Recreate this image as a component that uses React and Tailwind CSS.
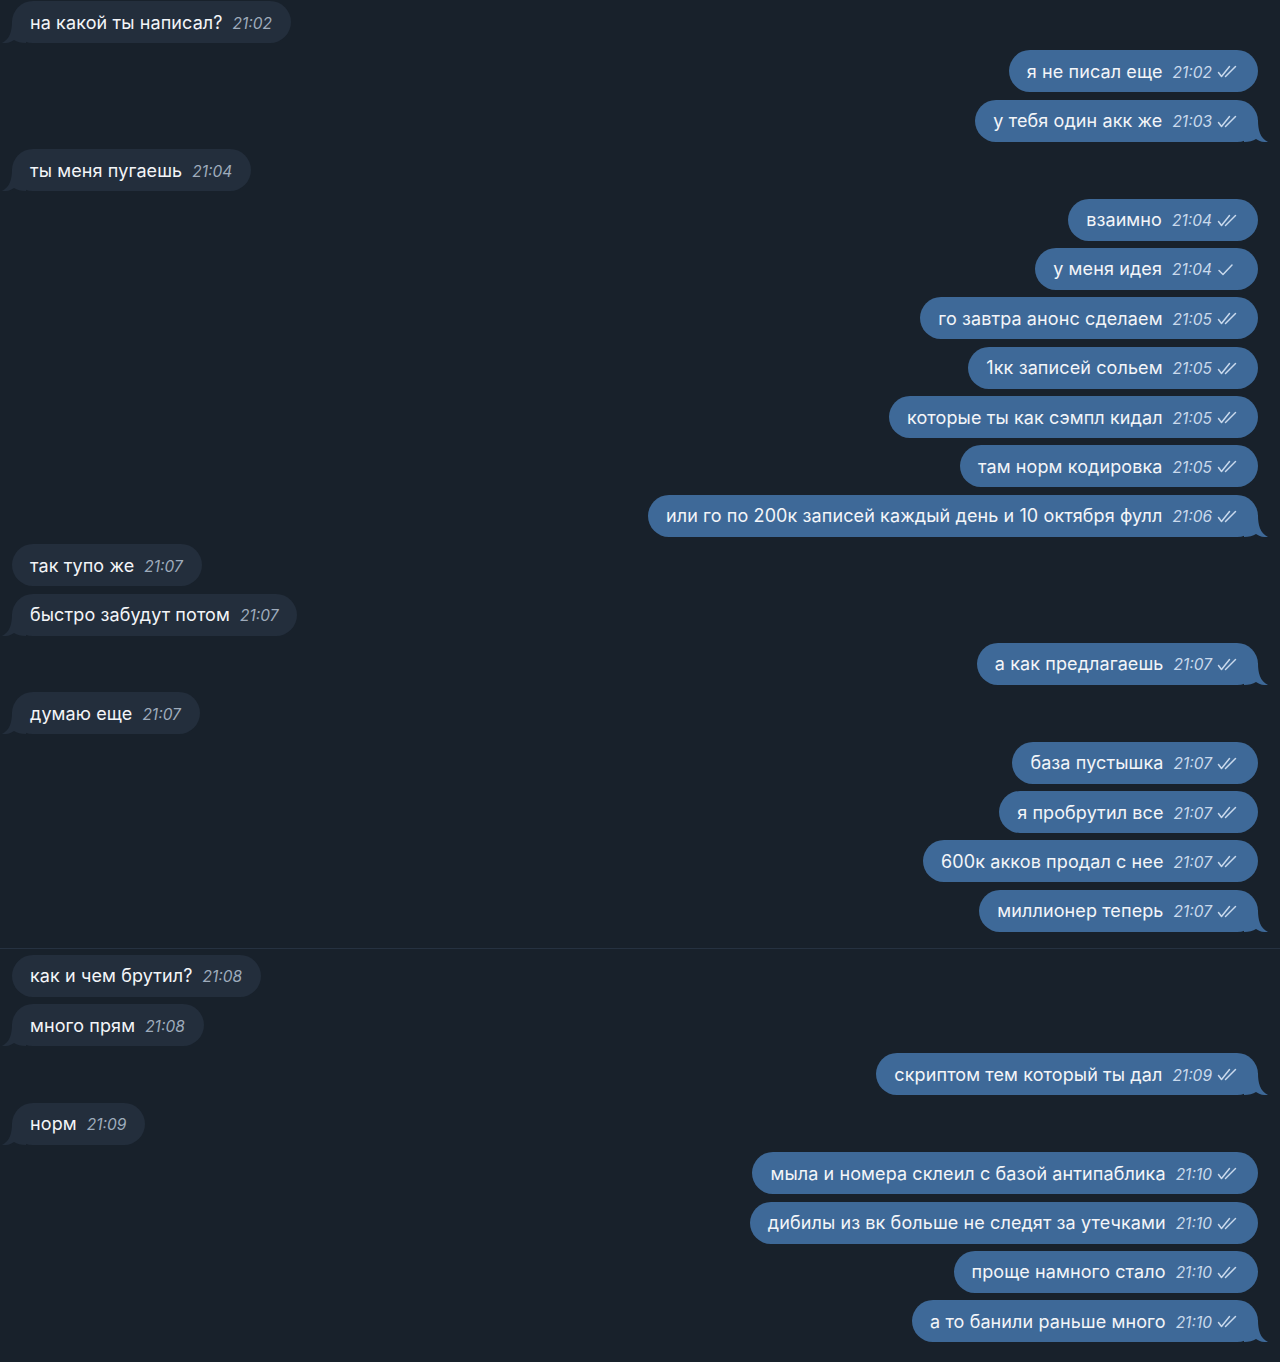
import React from 'react';

const messages = [
  { out: false, text: 'на какой ты написал?', time: '21:02', tail: true },
  { out: true, text: 'я не писал еще', time: '21:02' },
  { out: true, text: 'у тебя один акк же', time: '21:03', tail: true },
  { out: false, text: 'ты меня пугаешь', time: '21:04', tail: true },
  { out: true, text: 'взаимно', time: '21:04' },
  { out: true, text: 'у меня идея', time: '21:04', single: true },
  { out: true, text: 'го завтра анонс сделаем', time: '21:05' },
  { out: true, text: '1кк записей сольем', time: '21:05' },
  { out: true, text: 'которые ты как сэмпл кидал', time: '21:05' },
  { out: true, text: 'там норм кодировка', time: '21:05' },
  { out: true, text: 'или го по 200к записей каждый день и 10 октября фулл', time: '21:06', tail: true },
  { out: false, text: 'так тупо же', time: '21:07' },
  { out: false, text: 'быстро забудут потом', time: '21:07', tail: true },
  { out: true, text: 'а как предлагаешь', time: '21:07', tail: true },
  { out: false, text: 'думаю еще', time: '21:07', tail: true },
  { out: true, text: 'база пустышка', time: '21:07' },
  { out: true, text: 'я пробрутил все', time: '21:07' },
  { out: true, text: '600к акков продал с нее', time: '21:07' },
  { out: true, text: 'миллионер теперь', time: '21:07', tail: true },
  { divider: true },
  { out: false, text: 'как и чем брутил?', time: '21:08' },
  { out: false, text: 'много прям', time: '21:08', tail: true },
  { out: true, text: 'скриптом тем который ты дал', time: '21:09', tail: true },
  { out: false, text: 'норм', time: '21:09', tail: true },
  { out: true, text: 'мыла и номера склеил с базой антипаблика', time: '21:10' },
  { out: true, text: 'дибилы из вк больше не следят за утечками', time: '21:10' },
  { out: true, text: 'проще намного стало', time: '21:10' },
  { out: true, text: 'а то банили раньше много', time: '21:10', tail: true },
];

// read ticks, slanted like the iOS client draws them
const Checks = ({ single }) => (
  <svg width="22" height="14" viewBox="0 0 22 14" fill="none" className="ml-[4px] shrink-0">
    {single ? (
      <path d="M3 7.5 L7 11.5 L16 2" stroke="#c9d9ec" strokeWidth="1.5" strokeLinecap="round" strokeLinejoin="round" />
    ) : (
      <>
        <path d="M2.5 7.5 L5.5 11.5 L13.5 1.5" stroke="#c9d9ec" strokeWidth="1.5" strokeLinecap="round" strokeLinejoin="round" />
        <path d="M9.5 11.5 L19.5 1.5" stroke="#c9d9ec" strokeWidth="1.5" strokeLinecap="round" />
      </>
    )}
  </svg>
);

const Tail = ({ out }) => (
  <svg
    width="24"
    height="22"
    viewBox="0 0 24 22"
    className={out ? 'absolute bottom-0 right-[-10px]' : 'absolute bottom-0 left-[-10px] -scale-x-100'}
  >
    <path
      d="M0 22 L0 0 L14 0 C14 10 16 18 24 22 C19 22.4 15 21.2 12 19 C9 21 5 22 0 22 Z"
      fill={out ? '#3e6998' : '#232e3c'}
    />
  </svg>
);

const Bubble = ({ m }) => (
  <div className={`flex ${m.out ? 'justify-end pr-[22px]' : 'justify-start pl-[12px]'}`}>
    <div
      className={`relative h-[42px] flex items-center rounded-[21px] pl-[18px] ${
        m.out ? 'bg-[#3e6998] pr-[20px]' : 'bg-[#232e3c] pr-[19px]'
      }`}
    >
      {m.tail && <Tail out={m.out} />}
      <span className="relative flex items-baseline">
        <span className="text-[18px] text-[#f3f5f8] tracking-[0.1px]">{m.text}</span>
        <span
          className={`ml-[10px] text-[15.5px] italic ${m.out ? 'text-[#c9d9ec]' : 'text-[#9eabbb]'}`}
        >
          {m.time}
        </span>
      </span>
      {m.out && <span className="relative top-[1px]"><Checks single={m.single} /></span>}
    </div>
  </div>
);

export default function App() {
  return (
    <div
      className="min-h-screen w-[1280px] bg-[#18212b] pt-[1px] overflow-hidden"
      style={{ fontFamily: 'Inter, "Noto Sans", sans-serif' }}
    >
      <div className="flex flex-col gap-[7.38px]">
        {messages.map((m, i) =>
          m.divider ? (
            <div key={i} className="h-px bg-[#263241] mt-[8.6px] mb-[-1.4px]" />
          ) : (
            <Bubble key={i} m={m} />
          )
        )}
      </div>
    </div>
  );
}
